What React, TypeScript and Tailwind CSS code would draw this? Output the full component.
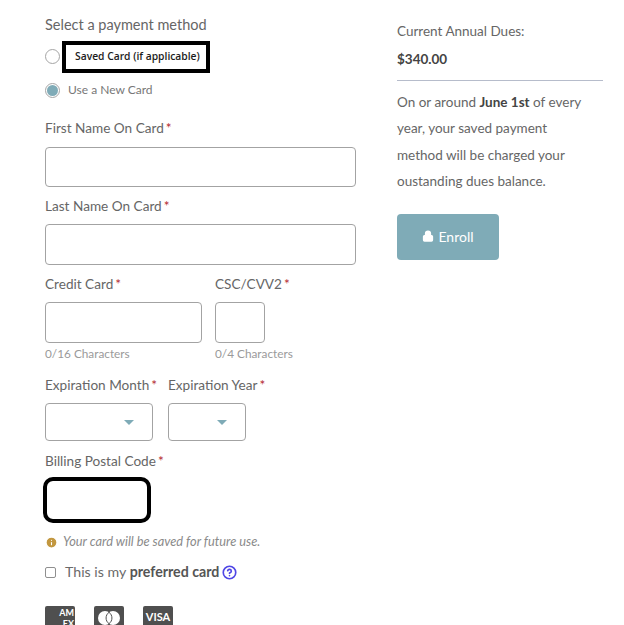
import { Lock, Info, CircleHelp } from "lucide-react"

function Label({ children }: { children: string }) {
  return (
    <div className="h-5 text-[13.6px] leading-5 text-[#666] whitespace-nowrap">
      {children}
      <span className="ml-[2px] text-[#b3262e]">*</span>
    </div>
  )
}

function Caret() {
  return <span className="absolute top-[16px] right-[18px] w-0 h-0 border-x-[5px] border-x-transparent border-t-[5px] border-t-[#7fabb7]" />
}

export default function App() {
  return (
    <div className="relative h-[625px] w-[624px] overflow-hidden bg-white font-['Lato',sans-serif] text-[#666]">
      <div className="flex pl-[45px] pt-[15px]">
        <div className="w-[311px] shrink-0">
          <div className="h-5 text-[14.5px] leading-5">Select a payment method</div>

          <div className="mt-[6px] flex items-center h-[32px]">
            <span className="-mt-[1px] w-[15px] h-[15px] rounded-full border border-[#a5a5a5] bg-white" />
            <div className="ml-[2px] w-[148px] h-[32px] border-[4px] border-black flex items-center pl-[9px] text-[10.3px] font-['Open_Sans',sans-serif] font-semibold text-[#1c1c1c] whitespace-nowrap">
              Saved Card (if applicable)
            </div>
          </div>

          <div className="mt-[9px] flex items-center h-[16px]">
            <span className="w-[15px] h-[15px] rounded-full border border-[#a5a5a5] flex items-center justify-center">
              <span className="w-[11px] h-[11px] rounded-full bg-[#7fabb7]" />
            </span>
            <span className="ml-[8px] text-[12px] text-[#777]">Use a New Card</span>
          </div>

          <div className="mt-[20px]"><Label>First Name On Card</Label></div>
          <div className="mt-[9px] h-[40px] rounded-[4px] border border-[#a3a3a3]" />

          <div className="mt-[9px]"><Label>Last Name On Card</Label></div>
          <div className="mt-[8px] h-[41px] rounded-[4px] border border-[#a3a3a3]" />

          <div className="mt-[9px] flex gap-[13px]">
            <div className="w-[157px]">
              <Label>Credit Card</Label>
              <div className="mt-[8px] h-[41px] rounded-[4px] border border-[#a3a3a3]" />
              <div className="mt-[3px] h-4 text-[11.8px] leading-4 text-[#9a9a9a]">0/16 Characters</div>
            </div>
            <div className="w-[50px]">
              <Label>CSC/CVV2</Label>
              <div className="mt-[8px] h-[41px] rounded-[4px] border border-[#a3a3a3]" />
              <div className="mt-[3px] h-4 text-[11.8px] leading-4 text-[#9a9a9a] whitespace-nowrap">0/4 Characters</div>
            </div>
          </div>

          <div className="mt-[13px] flex gap-[15px]">
            <div className="w-[108px]">
              <Label>Expiration Month</Label>
              <div className="relative mt-[8px] h-[38px] rounded-[4px] border border-[#a3a3a3]"><Caret /></div>
            </div>
            <div className="w-[78px]">
              <Label>Expiration Year</Label>
              <div className="relative mt-[8px] h-[38px] rounded-[4px] border border-[#a3a3a3]"><Caret /></div>
            </div>
          </div>

          <div className="mt-[10px]"><Label>Billing Postal Code</Label></div>
          <div className="-ml-[2px] mt-[6px] w-[108px] h-[46px] rounded-[10px] border-[4px] border-black" />

          <div className="mt-[11px] flex items-center h-4 text-[12.8px] italic text-[#8a8a8a]">
            <Info size={13} className="mr-[5px] fill-[#c2973f] text-white" />
            Your card will be saved for future use.
          </div>

          <div className="mt-[14px] flex items-center h-4 text-[14.2px] text-[#6a6a6a]">
            <span className="w-[11px] h-[11px] rounded-[2px] border border-[#8f8f8f]" />
            <span className="ml-[9px]">This is my <b className="text-[#555]">preferred card</b></span>
            <CircleHelp size={15} strokeWidth={2.6} className="ml-[3px] text-[#4f46e5]" />
          </div>

          <div className="mt-[26px] flex gap-[19px]">
            <div className="w-[30px] h-[24px] rounded-[2px] bg-[#4f4f4f] text-white text-[9px] font-bold leading-[11px] text-right pr-[1px] pt-[1px]">AM<br />EX</div>
            <div className="w-[30px] h-[24px] rounded-[2px] bg-[#4f4f4f] flex items-center justify-center">
              <svg width="26" height="16" viewBox="0 0 26 16">
                <circle cx="9" cy="8" r="7" fill="white" />
                <circle cx="17" cy="8" r="7" fill="white" />
                <path d="M13 2.3a7 7 0 0 1 0 11.4a7 7 0 0 1 0-11.4z" fill="white" stroke="#4f4f4f" strokeWidth="1" />
              </svg>
            </div>
            <div className="w-[30px] h-[24px] rounded-[2px] bg-[#4f4f4f] text-white text-[11px] font-bold text-center pt-[5px] leading-[12px]">VISA</div>
          </div>
        </div>

        <div className="ml-[41px] w-[206px] shrink-0 text-[#666]">
          <div className="mt-[6px] h-5 text-[13.5px] leading-5">Current Annual Dues:</div>
          <div className="mt-[8px] h-5 text-[13.5px] leading-5 font-bold text-[#444]">$340.00</div>
          <div className="mt-[11px] h-px bg-[#b6bccb]" />
          <p className="mt-[8px] text-[13.5px] leading-[26.3px]">
            On or around <b className="text-[#444]">June 1st</b> of every<br />
            year, your saved payment<br />
            method will be charged your<br />
            oustanding dues balance.
          </p>
          <div className="mt-[20px] w-[102px] h-[46px] rounded-[4px] bg-[#7fabb7] flex items-center justify-center gap-[4px] pb-[2px] text-[14px] text-white">
            <Lock size={12} strokeWidth={2.5} className="fill-white" />
            Enroll
          </div>
        </div>
      </div>
    </div>
  )
}
